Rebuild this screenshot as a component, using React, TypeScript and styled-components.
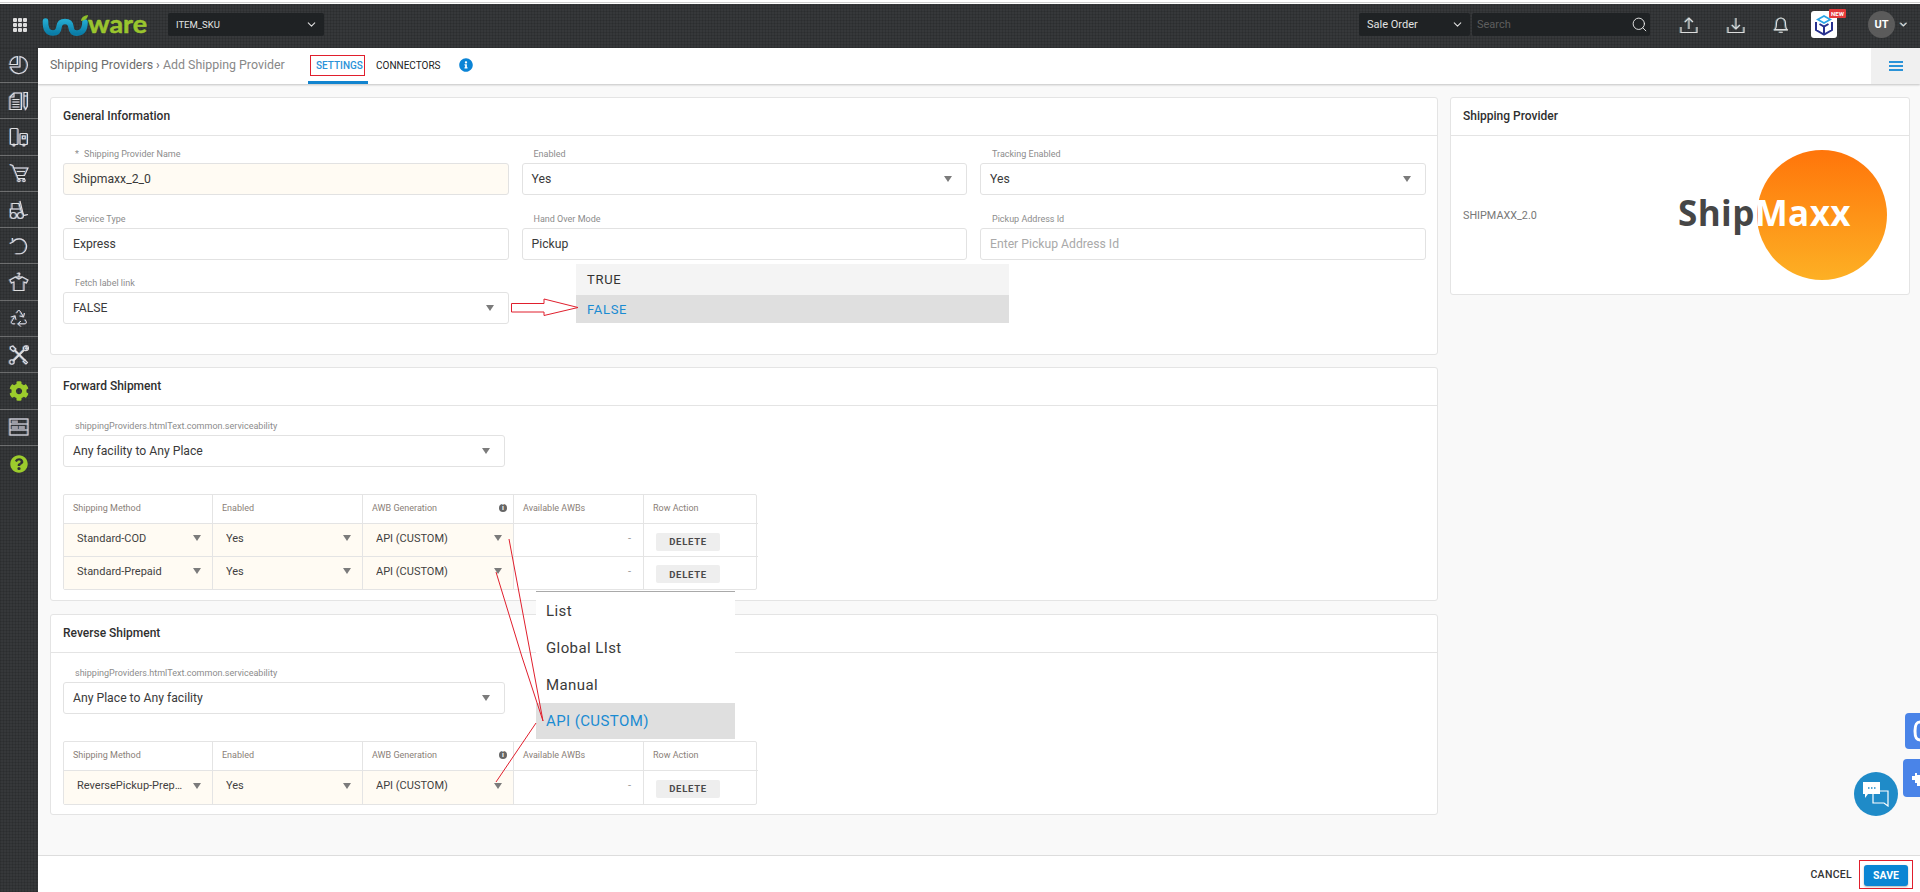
import React from "react";
import styled, { createGlobalStyle } from "styled-components";
import { ChevronDown, Search, Recycle } from "lucide-react";
import { FaCog, FaQuestionCircle, FaInfoCircle } from "react-icons/fa";

const Global = createGlobalStyle`
  html, body { margin: 0; padding: 0; background: #fff; overflow: hidden; }
  * { box-sizing: border-box; }
  body { font-family: Roboto, "Liberation Sans", sans-serif; }
`;

const Root = styled.div`
  position: relative;
  width: 1920px;
  height: 892px;
  overflow: hidden;
  display: flex;
  flex-direction: column;
`;
const TopLine = styled.div`
  height: 1px;
  margin: 2px 0 1px;
  background: #cfcfcf;
  flex: none;
`;
const texture = `
  background-color: #36383a;
  background-image:
    repeating-linear-gradient(0deg, rgba(0,0,0,.11) 0 1px, transparent 1px 3px),
    repeating-linear-gradient(90deg, rgba(0,0,0,.11) 0 1px, transparent 1px 3px);
`;
const Header = styled.header`
  ${texture}
  height: 44px;
  flex: none;
  display: flex;
  align-items: center;
  padding: 0 11px 3px 13px;
`;
const Dots = styled.div`
  display: grid;
  grid-template-columns: repeat(3, 4px);
  gap: 1px;
`;
const Dot = styled.span`
  width: 4px;
  height: 4px;
  border-radius: 1px;
  background: #dedede;
`;
const LogoSvg = styled.svg`
  width: 106px;
  height: 22px;
  margin: 2px 0 0 15px;
  flex: none;
  overflow: visible;
`;
const DarkSelect = styled.div<{ $w: number; $ml?: number; $size?: number }>`
  width: ${(p) => p.$w}px;
  margin-left: ${(p) => p.$ml ?? 0}px;
  height: 23px;
  background: #1f2224;
  border-radius: 2px;
  color: #e2e2e2;
  font-size: ${(p) => p.$size ?? 11}px;
  display: flex;
  align-items: center;
  justify-content: space-between;
  padding: 0 6px 0 8px;
  flex: none;
`;
const SearchBox = styled(DarkSelect)`
  color: #5e5e5e;
  padding: 0 2px 0 5px;
`;
const HeaderRight = styled.div`
  margin-left: auto;
  display: flex;
  align-items: center;
`;
const HeadIcon = styled.span<{ $ml: number }>`
  display: flex;
  margin-left: ${(p) => p.$ml}px;
  color: #dcdcdc;
  filter: drop-shadow(-0.4px 0 0 rgba(80, 170, 230, 0.5)) drop-shadow(0.4px 0 0 rgba(230, 170, 90, 0.4));
`;
const Tile = styled.div`
  position: relative;
  width: 26px;
  height: 27px;
  margin-left: 21px;
  background: #fff;
  border-radius: 3px;
  display: flex;
  align-items: center;
  justify-content: center;
`;
const NewBadge = styled.span`
  position: absolute;
  left: 18px;
  top: -2px;
  width: 17px;
  height: 9px;
  background: #e53a3a;
  color: #fff;
  border-radius: 1px;
  font-size: 6px;
  font-weight: 700;
  line-height: 9px;
  text-align: center;
`;
const Avatar = styled.div`
  width: 27px;
  height: 27px;
  margin-left: 31px;
  border-radius: 50%;
  background: #5b5b5b;
  color: #fff;
  font-size: 11px;
  font-weight: 700;
  display: flex;
  align-items: center;
  justify-content: center;
`;
const Body = styled.div`
  flex: 1;
  min-height: 0;
  display: flex;
`;
const Sidebar = styled.nav`
  ${texture}
  width: 38px;
  flex: none;
`;
const SideItem = styled.div`
  height: 36.3px;
  border-bottom: 1px solid rgba(165, 165, 165, 0.5);
  display: flex;
  align-items: center;
  justify-content: center;
  color: #dedede;
  &:first-child {
    height: 35px;
  }
  &:last-child {
    border-bottom: 0;
  }
`;
const SideGlyph = styled.span`
  display: flex;
  filter: drop-shadow(-0.5px 0 0 rgba(70, 160, 225, 0.6)) drop-shadow(0.5px 0 0 rgba(225, 90, 70, 0.45));
`;
const GreenGlyph = styled.span`
  display: flex;
  color: #9ccc2c;
`;
const Main = styled.main`
  flex: 1;
  min-width: 0;
  display: flex;
  flex-direction: column;
  background: #f9f9f9;
`;
const SubHeader = styled.div`
  height: 36px;
  flex: none;
  background: #fff;
  display: flex;
  align-items: stretch;
  padding-left: 12px;
  box-shadow: 0 1px 2px rgba(0, 0, 0, 0.22);
  position: relative;
`;
const Crumb = styled.div`
  display: flex;
  align-items: center;
  font-size: 12.4px;
  color: #6d6d6d;
  width: 258px;
  flex: none;
  padding-bottom: 3px;
`;
const CrumbLast = styled.span`
  color: #888;
`;
const Tab = styled.div<{ $active?: boolean; $w: number }>`
  position: relative;
  width: ${(p) => p.$w}px;
  display: flex;
  align-items: center;
  padding: 1px 0 0 8px;
  font-size: 10px;
  font-weight: ${(p) => (p.$active ? 500 : 400)};
  color: ${(p) => (p.$active ? "#2a93d8" : "#222")};
  border-bottom: 3px solid ${(p) => (p.$active ? "#1284cf" : "transparent")};
`;
const AnnotBox = styled.span`
  position: absolute;
  left: 2px;
  top: 7px;
  width: 55px;
  height: 21px;
  border: 1px solid #e01f2d;
`;
const InfoWrap = styled.span`
  display: flex;
  align-items: center;
  color: #0b84d6;
  margin: 0 0 3px 20px;
`;
const Hamburger = styled.div`
  margin-left: auto;
  width: 49px;
  background: #f0f0f0;
  display: flex;
  flex-direction: column;
  align-items: center;
  justify-content: center;
  gap: 2px;
`;
const Bar = styled.span`
  width: 14px;
  height: 2px;
  background: #2a93d8;
`;
const Content = styled.div`
  flex: 1;
  min-height: 0;
  display: grid;
  grid-template-columns: 1388px 460px;
  column-gap: 12px;
  align-items: start;
  padding: 13px 0 0 12px;
`;
const LeftCol = styled.div`
  display: flex;
  flex-direction: column;
`;
const Card = styled.section<{ $h: number; $mb?: number }>`
  height: ${(p) => p.$h}px;
  margin-bottom: ${(p) => p.$mb ?? 0}px;
  background: #fff;
  border: 1px solid #e4e4e4;
  border-radius: 3px;
`;
const CardTitle = styled.h2`
  margin: 0;
  height: 38px;
  padding: 0 0 1.5px 12px;
  display: flex;
  align-items: center;
  font-size: 12px;
  font-weight: 500;
  color: #2f2f2f;
  border-bottom: 1px solid #e4e4e4;
`;
const FormGrid = styled.div`
  display: grid;
  grid-template-columns: repeat(3, 445.5px);
  column-gap: 13px;
  row-gap: 15.5px;
  padding: 10px 0 0 12px;
`;
const Field = styled.div<{ $w?: number }>`
  width: ${(p) => (p.$w ? `${p.$w}px` : "auto")};
`;
const Label = styled.div`
  height: 17px;
  padding: 0 0 0 12px;
  font-size: 9px;
  line-height: 16px;
  color: #8c8c8c;
`;
const Star = styled.span`
  margin-right: 3px;
`;
const InputBox = styled.div<{ $tint?: boolean; $ph?: boolean }>`
  height: 32px;
  padding: 0 14px 0 9px;
  border: 1px solid #e2e2e2;
  border-radius: 3px;
  display: flex;
  align-items: center;
  justify-content: space-between;
  font-size: 12.2px;
  color: ${(p) => (p.$ph ? "#a9a9a9" : "#3a3a3a")};
  background: ${(p) => (p.$tint ? "#fffbf3" : "#fff")};
`;
const Caret = styled.span`
  width: 0;
  height: 0;
  border-left: 4.5px solid transparent;
  border-right: 4.5px solid transparent;
  border-top: 6px solid #7b7b7b;
  flex: none;
`;
const Section = styled.div`
  padding: 12px 0 0 12px;
`;
const Table = styled.div`
  margin-top: 27px;
  width: 694px;
  display: grid;
  grid-template-columns: 149px 150px 151px 130px 114px;
  border: 1px solid #e4e4e4;
  border-radius: 2px;
`;
const HeadCell = styled.div`
  height: 29px;
  padding: 0 9px 2px;
  display: flex;
  align-items: center;
  justify-content: space-between;
  font-size: 9px;
  color: #8a8078;
  border-right: 1px solid #e4e4e4;
  border-bottom: 1px solid #e4e4e4;
  &:nth-child(5) {
    border-right: 0;
  }
`;
const RowCell = styled.div<{ $last?: boolean; $end?: boolean }>`
  height: 32.5px;
  border-right: ${(p) => (p.$end ? "0" : "1px solid #e4e4e4")};
  border-bottom: ${(p) => (p.$last ? "0" : "1px solid #e4e4e4")};
`;
const SelectCell = styled(RowCell)`
  background: #fffbf3;
  padding: 0 11px 3px 13px;
  display: flex;
  align-items: center;
  justify-content: space-between;
  font-size: 11px;
  color: #3f3f3f;
`;
const ClipText = styled.span`
  white-space: nowrap;
  overflow: hidden;
  text-overflow: ellipsis;
  width: 106px;
`;
const NumCell = styled(RowCell)`
  padding: 0 12px 3px 0;
  display: flex;
  align-items: center;
  justify-content: flex-end;
  font-size: 11px;
  color: #999;
`;
const ActionCell = styled(RowCell)`
  padding: 6px 0 0 12px;
`;
const DeleteBtn = styled.button`
  width: 64px;
  height: 18px;
  padding: 0;
  border: 0;
  border-radius: 2px;
  background: #eee;
  color: #4a4a4a;
  font: 700 9.5px Roboto, sans-serif;
  letter-spacing: 0.7px;
`;
const InfoDot = styled.span`
  width: 8px;
  height: 8px;
  border-radius: 50%;
  background: #666;
  color: #fff;
  font-size: 7px;
  font-weight: 700;
  line-height: 8px;
  text-align: center;
  margin-right: -3px;
`;
const ProviderBody = styled.div`
  height: 159px;
  padding: 0 22px 0 12px;
  display: flex;
  align-items: center;
  justify-content: space-between;
`;
const ProviderName = styled.span`
  font-size: 10.8px;
  color: #777;
`;
const ShipLogo = styled.div`
  position: relative;
  width: 209px;
  height: 130px;
  padding-left: 79px;
  margin-top: -1px;
`;
const Circle = styled.div`
  width: 130px;
  height: 130px;
  border-radius: 50%;
  background: linear-gradient(180deg, #ff750a 0%, #fdb024 100%);
`;
const ShipText = styled.div`
  position: absolute;
  left: 0;
  top: 41px;
  font-family: "Open Sans", Roboto, sans-serif;
  font-weight: 700;
  font-size: 35px;
  line-height: 44px;
  letter-spacing: 0.4px;
  color: #464646;
  white-space: nowrap;
`;
const White = styled.span`
  color: #fff;
`;
const Footer = styled.footer`
  height: 37px;
  flex: none;
  background: #fff;
  border-top: 1px solid #ddd;
  display: flex;
  align-items: center;
  justify-content: flex-end;
  padding: 0 7px 0 0;
`;
const CancelText = styled.span`
  font-size: 10.5px;
  font-weight: 500;
  letter-spacing: 0.3px;
  color: #333;
  margin-right: 7px;
`;
const SaveFrame = styled.div`
  border: 1px solid #e01f2d;
  padding: 3px 4px;
  height: 29px;
`;
const SaveBtn = styled.button`
  width: 44px;
  height: 21px;
  padding: 0;
  border: 0;
  border-radius: 3px;
  background: #0a86d4;
  color: #fff;
  font: 700 10.5px Roboto, sans-serif;
  box-shadow: 0 1px 2px rgba(0, 0, 0, 0.3);
`;
const Menu = styled.div<{ $l: number; $t: number; $w: number }>`
  position: absolute;
  left: ${(p) => p.$l}px;
  top: ${(p) => p.$t}px;
  width: ${(p) => p.$w}px;
`;
const FlagItem = styled.div<{ $sel?: boolean; $h: number }>`
  height: ${(p) => p.$h}px;
  padding-left: 11px;
  display: flex;
  align-items: center;
  font-size: 13px;
  letter-spacing: 0.7px;
  color: ${(p) => (p.$sel ? "#1a8bd2" : "#333")};
  background: ${(p) => (p.$sel ? "#dfdfdf" : "#f4f4f4")};
`;
const AwbMenu = styled(Menu)`
  border-top: 1px solid #a9a9a9;
`;
const AwbItem = styled.div<{ $sel?: boolean; $h: number }>`
  height: ${(p) => p.$h}px;
  padding-left: 10px;
  display: flex;
  align-items: center;
  font-size: 15px;
  letter-spacing: 0.4px;
  color: ${(p) => (p.$sel ? "#1a8bd2" : "#3a3a3a")};
  background: ${(p) => (p.$sel ? "#dfdfdf" : "#fff")};
`;
const Annot = styled.svg`
  position: absolute;
  inset: 0;
  width: 1920px;
  height: 892px;
  pointer-events: none;
`;
const ChatBubble = styled.div`
  position: absolute;
  left: 1854px;
  top: 772px;
  width: 44px;
  height: 44px;
  border-radius: 50%;
  background: #1f8bc8;
  display: flex;
  align-items: center;
  justify-content: center;
`;
const SideWidget = styled.div<{ $l: number; $t: number; $h: number }>`
  position: absolute;
  left: ${(p) => p.$l}px;
  top: ${(p) => p.$t}px;
  width: ${(p) => 1920 - p.$l}px;
  height: ${(p) => p.$h}px;
  background: #4a84e8;
  border-radius: 4px 0 0 4px;
  display: flex;
  align-items: center;
  justify-content: flex-end;
`;

const stroke = { fill: "none", stroke: "currentColor", strokeWidth: 1.1 } as const;
const Ico = ({ children, w = 20 }: { children: React.ReactNode; w?: number }) => (
  <SideGlyph>
    <svg width={w} height={20} viewBox="0 0 20 20" {...stroke}>
      {children}
    </svg>
  </SideGlyph>
);

const sideIcons: React.ReactNode[] = [
  <Ico key="pie">
    <path d="M11 1.5A8.6 8.6 0 1 1 1.5 12H11Z" />
    <path d="M8.5 1.5A8 8 0 0 0 1 9.5H8.5Z" />
  </Ico>,
  <Ico key="doc">
    <path d="M5 2H12.5V18.5H1V6Z" />
    <path d="M5 2V6H1M3.5 8.5H10.5M3.5 11H10.5M3.5 13.5H10.5M3.5 16H10.5" />
    <path d="M15 1.5H18.5V15L16.7 18.5L15 15ZM15 5H18.5" />
  </Ico>,
  <Ico key="dev">
    <rect x="1.5" y="1.5" width="7.5" height="16" rx="1" />
    <rect x="11" y="6.5" width="7.5" height="11" rx="1" />
    <rect x="13.5" y="9" width="2.8" height="2.8" />
    <circle cx="5" cy="18" r="1" />
    <circle cx="15" cy="18" r="1" />
  </Ico>,
  <Ico key="cart">
    <path d="M1 1.5L3.8 2.5L9 15.5H16" />
    <path d="M5 5H19L15.5 12.5H8" />
    <path d="M8 8.5H16" />
    <circle cx="10" cy="17.5" r="1.2" />
    <circle cx="15" cy="17.5" r="1.2" />
  </Ico>,
  <Ico key="fork">
    <path d="M3 9V3.5H10L12.5 12" />
    <path d="M1.5 13.5V9H11" />
    <path d="M11 1L14.5 15.5L19 14.5" />
    <circle cx="4.5" cy="15.5" r="3" />
    <circle cx="11.5" cy="15.5" r="3" />
  </Ico>,
  <Ico key="ret">
    <path d="M4 6A7.5 7.5 0 1 1 11 17.800H6.500" />
    <path d="M1 7.500L4 6L3.500 2" />
  </Ico>,
  <Ico key="shirt">
    <path d="M6.500 5L1 8L2.500 11L5 10V18.500H15V10L17.500 11L19 8L13.500 5H6.500Z" />
    <path d="M6.500 5L10 7L13.500 5M10 5V3C11.500 2.500 11 1 10 1S8.700 1.700 8.700 2" />
  </Ico>,
  <SideGlyph key="rec">
    <Recycle size={20} strokeWidth={1.2} />
  </SideGlyph>,
  <Ico key="tools">
    <path d="M5.500 5L16 15.500" strokeWidth="2" />
    <path d="M1.500 2L4 1L7 4L4.500 6.500L1.500 4Z" />
    <path d="M15 5L4 16" strokeWidth="2" />
    <path d="M15 5C13.500 2.500 15.500 .5 18.500 1L16.500 3.200L17.500 4.200L19.500 2.200C20 5 17.500 6.500 15 5Z" />
    <circle cx="3" cy="17" r="2.200" />
    <path d="M15.500 14.500L18.500 17.500L17 19L14 16" />
  </Ico>,
  <GreenGlyph key="cog">
    <FaCog size={20} />
  </GreenGlyph>,
  <Ico key="shelf">
    <rect x="1" y="2" width="18" height="16" />
    <path d="M1 7H19M1 13H19" />
    <path d="M4 3.500V6M6 3.500V6M8 3.500V6M4 9V12M6 9V12M8 9V12M11 9V12M13 9V12M15 9V12" strokeWidth="1" />
  </Ico>,
  <GreenGlyph key="help">
    <FaQuestionCircle size={18} />
  </GreenGlyph>,
];

const Row = ({ a, last }: { a: string; last?: boolean }) => (
  <>
    <SelectCell $last={last}>
      <ClipText>{a}</ClipText>
      <Caret />
    </SelectCell>
    <SelectCell $last={last}>
      <ClipText>Yes</ClipText>
      <Caret />
    </SelectCell>
    <SelectCell $last={last}>
      <ClipText>API (CUSTOM)</ClipText>
      <Caret />
    </SelectCell>
    <NumCell $last={last}>-</NumCell>
    <ActionCell $last={last} $end>
      <DeleteBtn>DELETE</DeleteBtn>
    </ActionCell>
  </>
);

const TableHead = () => (
  <>
    <HeadCell>Shipping Method</HeadCell>
    <HeadCell>Enabled</HeadCell>
    <HeadCell>
      AWB Generation
      <InfoDot>i</InfoDot>
    </HeadCell>
    <HeadCell>Available AWBs</HeadCell>
    <HeadCell>Row Action</HeadCell>
  </>
);

export default function App() {
  return (
    <Root>
      <Global />
      <TopLine />
      <Header>
        <Dots>
          {Array.from({ length: 9 }, (_, i) => (
            <Dot key={i} />
          ))}
        </Dots>
        <LogoSvg viewBox="0 0 106 22">
          <defs>
            <linearGradient id="uni" x1="0" y1="0" x2="0" y2="1">
              <stop offset="0" stopColor="#22a9cf" />
              <stop offset="1" stopColor="#0b7ea8" />
            </linearGradient>
          </defs>
          <path
            d="M3.500 6Q3 18 11 18Q16.500 18 17 12Q17.500 6.500 23 6.500Q28.500 6.500 29 12Q29.500 19 36 18Q43 17 43 7"
            fill="none"
            stroke="url(#uni)"
            strokeWidth="5.6"
            strokeLinecap="round"
          />
          <path d="M39 6Q39 1 46 0Q46 5 39 6Z" fill="#8fbf2b" />
          <text
            x="46"
            y="18"
            fontFamily="Lato, sans-serif"
            fontWeight="700"
            fontSize="25"
            fill="#9ac52e"
            stroke="#9ac52e"
            strokeWidth="0.5"
            textLength="59"
            lengthAdjust="spacingAndGlyphs"
          >
            ware
          </text>
        </LogoSvg>
        <DarkSelect $w={156} $ml={20} $size={9.5}>
          ITEM_SKU
          <ChevronDown size={13} color="#ddd" />
        </DarkSelect>
        <HeaderRight>
          <DarkSelect $w={111} $size={11}>
            Sale Order
            <ChevronDown size={13} color="#ddd" />
          </DarkSelect>
          <SearchBox $w={178} $ml={2}>
            Search
            <Search size={17} color="#eee" strokeWidth={1.3} />
          </SearchBox>
          <HeadIcon $ml={30}>
            <svg width="18" height="18" viewBox="0 0 18 18" {...stroke}>
              <path d="M1 11V16.500H17V11M9 13V2M5 6L9 2L13 6" />
            </svg>
          </HeadIcon>
          <HeadIcon $ml={29}>
            <svg width="18" height="18" viewBox="0 0 18 18" {...stroke}>
              <path d="M1 11V16.500H17V11M9 2V13M5 9L9 13L13 9" />
            </svg>
          </HeadIcon>
          <HeadIcon $ml={27}>
            <svg width="18" height="18" viewBox="0 0 18 18" {...stroke}>
              <path d="M3 13.500C4.500 12 4.500 10 4.500 7A4.500 5 0 0 1 13.500 7C13.500 10 13.500 12 15 13.500ZM2 14H16M7.200 16.200H10.800" />
            </svg>
          </HeadIcon>
          <Tile>
            <svg width="20" height="22" viewBox="0 0 20 22">
              <path d="M10 1L18 5.500L10 10L2 5.500Z" fill="#29a4e6" />
              <path d="M5.500 5.500L10 3L14.500 5.500L10 8Z" fill="#fff" />
              <path
                d="M2 8V16L10 20.500L18 16V8M10 12V20.500M5.500 10L10 12.500L14.500 10"
                fill="none"
                stroke="#27308f"
                strokeWidth="2"
              />
            </svg>
            <NewBadge>NEW</NewBadge>
          </Tile>
          <Avatar>UT</Avatar>
          <HeadIcon $ml={3}>
            <ChevronDown size={11} strokeWidth={2.4} />
          </HeadIcon>
        </HeaderRight>
      </Header>
      <Body>
        <Sidebar>
          {sideIcons.map((ic, i) => (
            <SideItem key={i}>{ic}</SideItem>
          ))}
        </Sidebar>
        <Main>
          <SubHeader>
            <Crumb>
              Shipping Providers&nbsp;›&nbsp;<CrumbLast>Add Shipping Provider</CrumbLast>
            </Crumb>
            <Tab $active $w={60}>
              SETTINGS
              <AnnotBox />
            </Tab>
            <Tab $w={71}>CONNECTORS</Tab>
            <InfoWrap>
              <FaInfoCircle size={14} />
            </InfoWrap>
            <Hamburger>
              <Bar />
              <Bar />
              <Bar />
            </Hamburger>
          </SubHeader>
          <Content>
            <LeftCol>
              <Card $h={258} $mb={12}>
                <CardTitle>General Information</CardTitle>
                <FormGrid>
                  <Field>
                    <Label>
                      <Star>*</Star> Shipping Provider Name
                    </Label>
                    <InputBox $tint>Shipmaxx_2_0</InputBox>
                  </Field>
                  <Field>
                    <Label>Enabled</Label>
                    <InputBox>
                      Yes
                      <Caret />
                    </InputBox>
                  </Field>
                  <Field>
                    <Label>Tracking Enabled</Label>
                    <InputBox>
                      Yes
                      <Caret />
                    </InputBox>
                  </Field>
                  <Field>
                    <Label>Service Type</Label>
                    <InputBox>Express</InputBox>
                  </Field>
                  <Field>
                    <Label>Hand Over Mode</Label>
                    <InputBox>Pickup</InputBox>
                  </Field>
                  <Field>
                    <Label>Pickup Address Id</Label>
                    <InputBox $ph>Enter Pickup Address Id</InputBox>
                  </Field>
                  <Field>
                    <Label>Fetch label link</Label>
                    <InputBox>
                      FALSE
                      <Caret />
                    </InputBox>
                  </Field>
                </FormGrid>
              </Card>
              <Card $h={234} $mb={13}>
                <CardTitle>Forward Shipment</CardTitle>
                <Section>
                  <Field $w={442}>
                    <Label>shippingProviders.htmlText.common.serviceability</Label>
                    <InputBox>
                      Any facility to Any Place
                      <Caret />
                    </InputBox>
                  </Field>
                  <Table>
                    <TableHead />
                    <Row a="Standard-COD" />
                    <Row a="Standard-Prepaid" last />
                  </Table>
                </Section>
              </Card>
              <Card $h={201}>
                <CardTitle>Reverse Shipment</CardTitle>
                <Section>
                  <Field $w={442}>
                    <Label>shippingProviders.htmlText.common.serviceability</Label>
                    <InputBox>
                      Any Place to Any facility
                      <Caret />
                    </InputBox>
                  </Field>
                  <Table>
                    <TableHead />
                    <Row a="ReversePickup-Prepaid" last />
                  </Table>
                </Section>
              </Card>
            </LeftCol>
            <Card $h={198}>
              <CardTitle>Shipping Provider</CardTitle>
              <ProviderBody>
                <ProviderName>SHIPMAXX_2.0</ProviderName>
                <ShipLogo>
                  <Circle />
                  <ShipText>
                    Ship<White>Maxx</White>
                  </ShipText>
                </ShipLogo>
              </ProviderBody>
            </Card>
          </Content>
          <Footer>
            <CancelText>CANCEL</CancelText>
            <SaveFrame>
              <SaveBtn>SAVE</SaveBtn>
            </SaveFrame>
          </Footer>
        </Main>
      </Body>

      <Menu $l={576} $t={264} $w={433}>
        <FlagItem $h={31}>TRUE</FlagItem>
        <FlagItem $h={28} $sel>
          FALSE
        </FlagItem>
      </Menu>
      <AwbMenu $l={536} $t={591} $w={199}>
        <AwbItem $h={37}>List</AwbItem>
        <AwbItem $h={37}>Global LIst</AwbItem>
        <AwbItem $h={37}>Manual</AwbItem>
        <AwbItem $h={36} $sel>
          API (CUSTOM)
        </AwbItem>
      </AwbMenu>
      <Annot viewBox="0 0 1920 892">
        <g fill="none" stroke="#e01f2d" strokeWidth="1">
          <path d="M511.500 303.500H544V299L578 307.500L544 315.500V312H511.500Z" fill="#fff" />
          <path d="M509 539L543 721" />
          <path d="M496 572L522 657L543 721" />
          <path d="M536 723L496 782" />
        </g>
      </Annot>
      <SideWidget $l={1905} $t={713} $h={36}>
        <svg width="7" height="22" viewBox="0 0 7 22">
          <path d="M7 2C3 2 2 5 2 11S3 20 7 20" fill="none" stroke="#fff" strokeWidth="3" />
        </svg>
      </SideWidget>
      <SideWidget $l={1903} $t={759} $h={38}>
        <svg width="9" height="16" viewBox="0 0 9 16">
          <path d="M9 0V5H6V3H4V6H1V10H4V13H6V16H9Z" fill="#fff" />
        </svg>
      </SideWidget>
      <ChatBubble>
        <svg width="28" height="26" viewBox="0 0 28 26" fill="none">
          <path d="M11 10H26V22V25L22 22H11Z" stroke="#fff" strokeWidth="1.2" />
          <path d="M1 1H18V13H6L3 17V13H1Z" fill="#fff" />
          <path d="M6 7H7.500M9 7H10.500M12 7H13.500" stroke="#1f8bc8" strokeWidth="1.6" />
        </svg>
      </ChatBubble>
    </Root>
  );
}
